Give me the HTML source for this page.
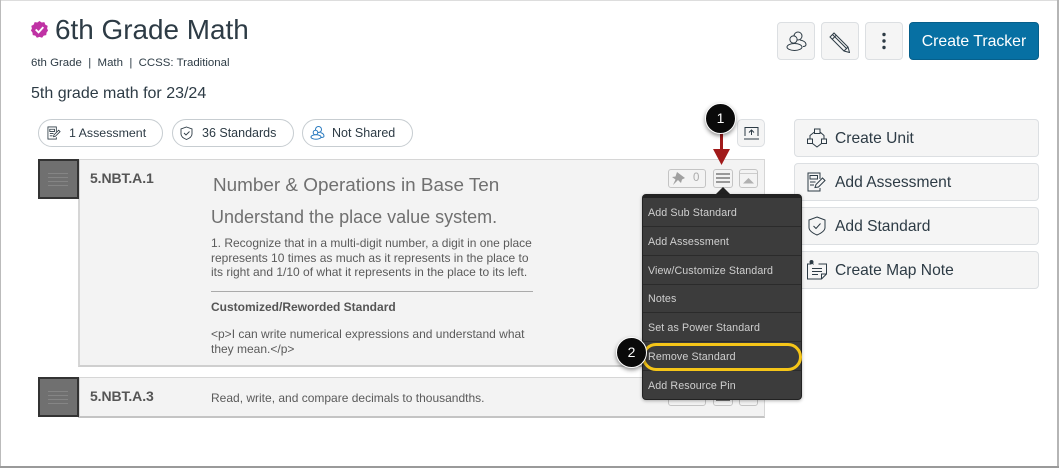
<!DOCTYPE html>
<html><head><meta charset="utf-8"><style>
html,body{margin:0;padding:0;background:#fff}
#p{position:relative;width:1060px;height:469px;overflow:hidden;background:#fff;font-family:"Liberation Sans",sans-serif}
#p div,#p svg{position:absolute}
.t{white-space:nowrap;color:#2d3b45}
.btn{background:#f5f5f5;border:1px solid #dcdfe2;border-radius:4px;box-sizing:border-box}
.pill{background:#fff;border:1px solid #c7cdd1;border-radius:14px;box-sizing:border-box;height:28px;top:119px}
.side{left:794px;width:245px;height:38px}
.st{font-size:15.6px;color:#2d3b45;left:835px;white-space:nowrap}
.m{left:648px;font-size:10.7px;color:#cfcfcf;white-space:nowrap;letter-spacing:.1px}
.sep{left:643px;width:158px;height:1px;background:#2b2b2b}
.g{color:#5a5a5a;white-space:nowrap}
.hd{background:#707070;border:2px solid #333;box-sizing:border-box;left:38px;width:41px}
.hl{background:#858585;height:1px;width:20px;left:8px}
.ic{fill:none;stroke:#2d3b45;stroke-width:1}
.tb{border:1px solid #c4c4c4;border-radius:3px;box-sizing:border-box;background:#f3f3f3}
</style></head><body><div id="p">

<!-- frame -->
<div style="left:0;top:0;width:1px;height:467px;background:#bbb"></div>
<div style="left:1px;top:0;width:1056px;height:1px;background:#ddd"></div>
<div style="left:1057px;top:0;width:2px;height:467px;background:#b5b5b5"></div>
<div style="left:0;top:466px;width:1059px;height:2px;background:#9a9a9a"></div>

<!-- title -->
<svg style="left:30px;top:20px" width="19" height="19" viewBox="0 0 20 20"><path fill="#bf32a4" d="M10 1l2.300 1.600 2.800-.3 1 2.600 2.500 1.300-.6 2.800 1 2-1.600 2.300-.3 2.600-2.700.6-1.700 2.200-2.700-.9-2.700.9-1.700-2.200-2.700-.6-.3-2.600L1 11l1-2-.6-2.800 2.500-1.300 1-2.600 2.800.3z"/><path d="M6 10l3 3 5-5.500" fill="none" stroke="#fff" stroke-width="2"/></svg>
<div class="t" style="left:55px;top:13px;font-size:27.9px;line-height:34px">6th Grade Math</div>
<div class="t" style="left:31px;top:56px;font-size:11.45px;line-height:15px">6th Grade &nbsp;|&nbsp; Math &nbsp;|&nbsp; CCSS: Traditional</div>
<div class="t" style="left:31px;top:85px;font-size:16px;line-height:18px">5th grade math for 23/24</div>

<!-- top buttons -->
<div class="btn" style="left:777px;top:22px;width:38px;height:38px"></div>
<div class="btn" style="left:821px;top:22px;width:38px;height:38px"></div>
<div class="btn" style="left:865px;top:22px;width:38px;height:38px"></div>
<svg class="ic" style="left:786px;top:31px" width="21" height="21" viewBox="0 0 21 21"><circle cx="12" cy="5" r="4"/><circle cx="7.500" cy="8.500" r="3.600" fill="#f5f5f5"/><path d="M14 9c3 .5 6 2 6 4.500 0 1.500-1.500 2-3 2"/><ellipse cx="8.500" cy="16" rx="7.500" ry="3.500" fill="#f5f5f5"/></svg>
<svg class="ic" style="left:829px;top:32px" width="21" height="21" viewBox="0 0 21 21"><path d="M1 5L5 1l14 14 1.500 5.500L15 19z"/><path d="M3.500 2.500L18 17M3 7.500L7.500 3M15 19l4-4"/></svg>
<svg style="left:880px;top:31px" width="8" height="20"><circle cx="4" cy="3.500" r="1.700" fill="#2d3b45"/><circle cx="4" cy="10" r="1.700" fill="#2d3b45"/><circle cx="4" cy="16.500" r="1.700" fill="#2d3b45"/></svg>
<div style="left:909px;top:22px;width:130px;height:38px;background:#0770a3;border:1px solid #065f8b;box-sizing:border-box;border-radius:4px;color:#fff;font-size:15.8px;line-height:38px;text-align:center;white-space:nowrap">Create Tracker</div>

<!-- pills -->
<div class="pill" style="left:38px;width:125px"></div>
<svg class="ic" style="left:47px;top:126px;stroke-width:.9" width="14" height="14" viewBox="0 0 15 15"><path d="M10 6V1H1v13h9v-2M3 3.500h5v2.500H3zM3 8h4M3 10.500h3M7 11.500l.5-2 5-5 1.500 1.500-5 5z"/></svg>
<div class="t" style="left:69px;top:125px;font-size:12.4px;line-height:16px">1 Assessment</div>
<div class="pill" style="left:172px;width:122px"></div>
<svg class="ic" style="left:180px;top:126px;stroke-width:.9" width="13" height="14" viewBox="0 0 13 14"><path d="M6.500 1L12 3v5c0 2.500-3 4.500-5.500 5.500C4 12.500 1 10.500 1 8V3z"/><path d="M4 7l2 2 3.500-3.500"/></svg>
<div class="t" style="left:202px;top:125px;font-size:12.500px;line-height:16px">36 Standards</div>
<div class="pill" style="left:302px;width:111px"></div>
<svg style="left:310px;top:125px;fill:none;stroke:#2a7abf;stroke-width:1" width="15" height="15" viewBox="0 0 15 15"><circle cx="8.500" cy="4.500" r="3"/><circle cx="5.500" cy="7.500" r="2.300" fill="#fff"/><path d="M10.500 7.500c1.500.5 3.500 1.500 3.500 3.500 0 1-1.500 1.500-3 1.500"/><ellipse cx="6" cy="12" rx="5" ry="2.200" fill="#fff"/></svg>
<div class="t" style="left:332px;top:125px;font-size:12.500px;line-height:16px">Not Shared</div>

<div class="btn" style="left:737px;top:119px;width:28px;height:28px;border-radius:5px"></div>
<svg style="left:743px;top:126px;fill:none;stroke:#2d3b45;stroke-width:1" width="17" height="14"><path d="M2 10V1.500h13V10M1 13h15M8.500 9V4M6 6.500L8.500 4 11 6.500"/></svg>

<!-- row 1 -->
<div style="left:78px;top:159px;width:687px;height:208px;background:#f3f3f3;border:1px solid #d6d6d6;border-left-width:2px;border-bottom:2px solid #cfcfcf;box-sizing:border-box"></div>
<div class="hd" style="top:159px;height:40px"><div class="hl" style="top:12px"></div><div class="hl" style="top:16px"></div><div class="hl" style="top:20px"></div><div class="hl" style="top:24px"></div></div>
<div style="left:90px;top:171px;font-size:14px;line-height:15px;font-weight:bold;color:#555;white-space:nowrap;letter-spacing:-.1px">5.NBT.A.1</div>
<div style="left:213px;top:175px;font-size:18.9px;line-height:22px;color:#707070;white-space:nowrap">Number &amp; Operations in Base Ten</div>
<div style="left:211px;top:206px;font-size:18px;line-height:22px;color:#707070;white-space:nowrap">Understand the place value system.</div>
<div class="g" style="left:211px;top:236px;line-height:14.700px;font-size:12px">1. Recognize that in a multi-digit number, a digit in one place<br>represents 10 times as much as it represents in the place to<br>its right and 1/10 of what it represents in the place to its left.</div>
<div style="left:211px;top:291px;width:322px;height:1px;background:#aaa"></div>
<div style="left:211px;top:300px;font-size:12px;line-height:14px;font-weight:bold;color:#555;white-space:nowrap">Customized/Reworded Standard</div>
<div class="g" style="left:211px;top:327px;line-height:15px;font-size:12px">&lt;p&gt;I can write numerical expressions and understand what<br>they mean.&lt;/p&gt;</div>

<!-- row 1 tools -->
<div class="tb" style="left:668px;top:169px;width:38px;height:19px"></div>
<svg style="left:671px;top:172px" width="14" height="13" viewBox="0 0 14 13"><path fill="#a0a0a0" d="M6 0l8 6-3 1.500-1 3.500-3-3L2 13l2.500-5.500L1 5l3.500-.5z"/></svg>
<div style="left:693px;top:172px;font-size:11.500px;line-height:13px;color:#aaa">0</div>
<div class="tb" style="left:713px;top:169px;width:20px;height:19px"></div>
<div style="left:716px;top:173px;width:14px;height:2px;background:#999"></div>
<div style="left:716px;top:177px;width:14px;height:2px;background:#999"></div>
<div style="left:716px;top:181px;width:14px;height:2px;background:#999"></div>
<div class="tb" style="left:739px;top:169px;width:19px;height:19px"></div>
<div style="left:740px;top:173px;width:17px;height:1px;background:#ccc"></div>
<svg style="left:743px;top:178px" width="11" height="6"><path d="M0 5.500L5.500 0 11 5.500z" fill="#b0b0b0"/></svg>

<!-- row 2 -->
<div style="left:78px;top:377px;width:687px;height:41px;background:#f3f3f3;border:1px solid #d6d6d6;border-left-width:2px;border-bottom:2px solid #c4c4c4;box-sizing:border-box"></div>
<div class="hd" style="top:377px;height:40px"><div class="hl" style="top:12px"></div><div class="hl" style="top:16px"></div><div class="hl" style="top:20px"></div><div class="hl" style="top:24px"></div></div>
<div style="left:90px;top:389px;font-size:14px;line-height:15px;font-weight:bold;color:#555;white-space:nowrap;letter-spacing:-.1px">5.NBT.A.3</div>
<div class="g" style="left:211px;top:391px;line-height:15px;font-size:12px">Read, write, and compare decimals to thousandths.</div>
<div class="tb" style="left:668px;top:387px;width:38px;height:19px"></div>
<div class="tb" style="left:713px;top:387px;width:20px;height:19px"></div>
<div style="left:716px;top:393px;width:14px;height:8px;background:#777"></div>
<div class="tb" style="left:739px;top:387px;width:19px;height:19px"></div>

<!-- side buttons -->
<div class="btn side" style="top:119px"></div>
<div class="btn side" style="top:163px"></div>
<div class="btn side" style="top:207px"></div>
<div class="btn side" style="top:251px"></div>
<svg class="ic" style="left:807px;top:128px" width="20" height="20" viewBox="0 0 20 20"><rect x="7.500" y="1" width="5.500" height="4.500"/><rect x=".5" y="11" width="5" height="4.500"/><rect x="14.500" y="11" width="5" height="4.500"/><path d="M7.500 4L3 7.500V11M13 4l4 3.500V11M5.500 15.500l4.500 3.500 4.500-3.500"/></svg>
<div class="st" style="top:130px;line-height:18px">Create Unit</div>
<svg class="ic" style="left:807px;top:172px" width="20" height="20" viewBox="0 0 20 20"><path d="M13 7V1H1v18h12v-3M3 3.500h7.500v3.500H3zM3 10h5.500M3 13h4M8 15.500l1-3 6.500-6.500 2.500 2.500-6.500 6.500z"/></svg>
<div class="st" style="top:174px;line-height:18px">Add Assessment</div>
<svg class="ic" style="left:808px;top:216px" width="18" height="20" viewBox="0 0 18 20"><path d="M9 1l8 3v7.500c0 3.500-4.500 6-8 7.500-3.500-1.500-8-4-8-7.500V4z"/><path d="M5.500 10l2.500 2.500 4.500-5"/></svg>
<div class="st" style="top:218px;line-height:18px">Add Standard</div>
<svg class="ic" style="left:807px;top:260px" width="20" height="20" viewBox="0 0 20 20"><path d="M4.500 4H.5v15h14l5-5V4h-8M6.500 4.500l-2-2.500M14.500 19v-5h5M5 8.500h10M5 11.500h10M5 14.500h6"/><circle cx="4.500" cy="2" r="1.500" fill="#2d3b45"/></svg>
<div class="st" style="top:262px;line-height:18px">Create Map Note</div>

<!-- arrow -->
<div style="left:720px;top:131px;width:3px;height:20px;background:#a11a1a"></div>
<svg style="left:713px;top:149px" width="17" height="17"><path d="M0 0h17L8.500 16z" fill="#a11a1a"/></svg>

<!-- menu -->
<svg style="left:714px;top:187px" width="18" height="9"><path d="M0 9L9 0l9 9z" fill="#222"/></svg>
<div style="left:642px;top:194px;width:160px;height:206px;background:#3c3c3c;border:1px solid #222;border-top:4px solid #222;box-sizing:border-box;border-radius:4px;box-shadow:0 1px 3px rgba(0,0,0,.3)"></div>
<div class="sep" style="top:226px"></div>
<div class="sep" style="top:255px"></div>
<div class="sep" style="top:284px"></div>
<div class="sep" style="top:312px"></div>
<div class="sep" style="top:341px"></div>
<div class="sep" style="top:370px"></div>
<div class="m" style="top:207px;line-height:13px">Add Sub Standard</div>
<div class="m" style="top:236px;line-height:13px">Add Assessment</div>
<div class="m" style="top:265px;line-height:13px">View/Customize Standard</div>
<div class="m" style="top:293px;line-height:13px">Notes</div>
<div class="m" style="top:322px;line-height:13px">Set as Power Standard</div>
<div class="m" style="top:351px;line-height:13px">Remove Standard</div>
<div class="m" style="top:380px;line-height:13px">Add Resource Pin</div>
<div style="left:642px;top:343px;width:160px;height:28px;border:3px solid #f5c518;box-sizing:border-box;border-radius:14px"></div>

<!-- callouts -->
<div style="left:705px;top:103px;width:31px;height:31px;border-radius:50%;background:#0a0a0a;border:1px solid #fff;box-sizing:border-box;box-shadow:0 2px 4px rgba(0,0,0,.45);color:#fff;font-size:14px;line-height:28px;text-align:center">1</div>
<div style="left:616px;top:337px;width:31px;height:31px;border-radius:50%;background:#0a0a0a;border:1px solid #fff;box-sizing:border-box;box-shadow:0 2px 4px rgba(0,0,0,.45);color:#fff;font-size:14px;line-height:28px;text-align:center">2</div>

</div></body></html>
